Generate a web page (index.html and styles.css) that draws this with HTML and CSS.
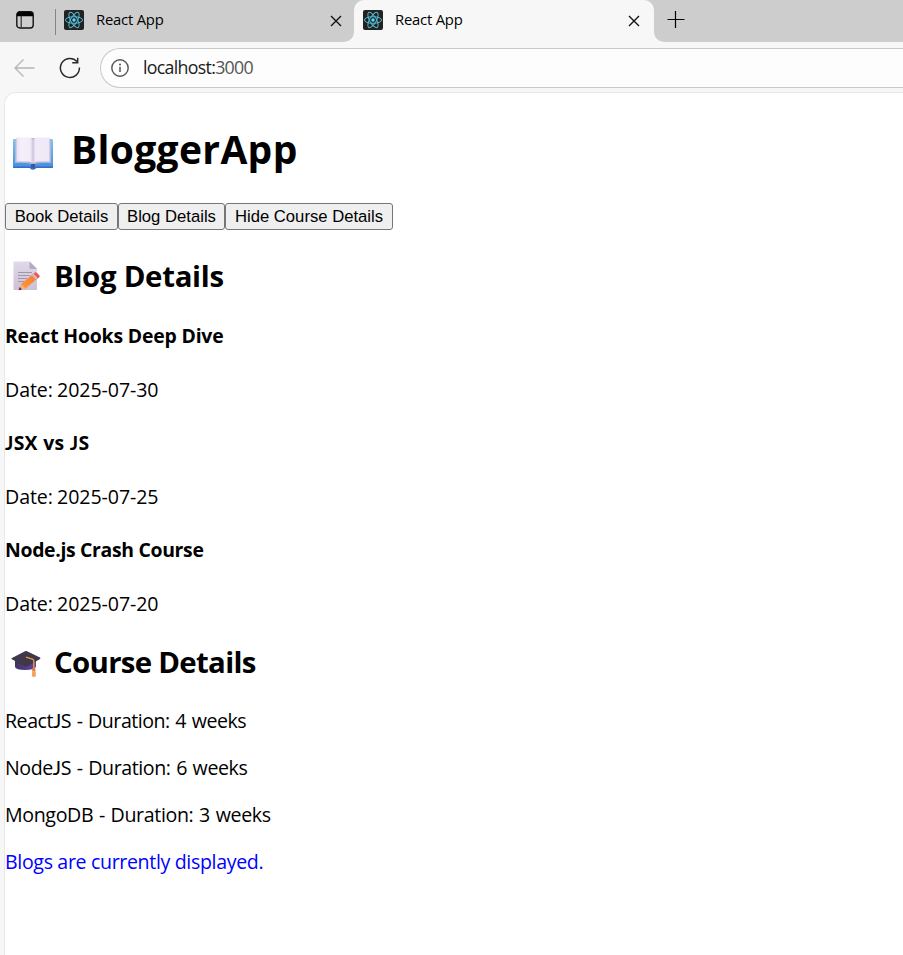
FILE: index.html
```html
<!DOCTYPE html>
<html lang="en">
<head>
<meta charset="utf-8">
<title>React App</title>
<link rel="stylesheet" href="styles.css">
</head>
<body>
<svg width="0" height="0" class="defs">
  <symbol id="react" viewBox="0 0 20 20">
    <rect width="20" height="20" rx="2" fill="#222"/>
    <g fill="none" stroke="#53b9d3" stroke-width="1">
      <ellipse cx="10" cy="10" rx="8.6" ry="3.3"/>
      <ellipse cx="10" cy="10" rx="8.6" ry="3.3" transform="rotate(60 10 10)"/>
      <ellipse cx="10" cy="10" rx="8.6" ry="3.3" transform="rotate(120 10 10)"/>
    </g>
    <circle cx="10" cy="10" r="1.7" fill="#61dafb"/>
  </symbol>
  <symbol id="close" viewBox="0 0 12 12">
    <path d="M1 1L11 11M11 1L1 11" fill="none" stroke="#111" stroke-width="1.4"/>
  </symbol>
</svg>
<header class="tabs">
  <div class="tools">
    <svg class="panel" width="18" height="18" viewBox="0 0 18 18"><rect x=".8" y=".8" width="16.4" height="16.2" rx="3" fill="none" stroke="#111" stroke-width="1.4"/><path d="M1 5.2V3.5Q1 1 3.5 1H14.5Q17 1 17 3.5V5.2Z" fill="#000"/><path d="M5.2 5V17" stroke="#333" stroke-width="1.2"/></svg>
    <span class="divider"></span>
  </div>
  <div class="tab first">
    <svg class="logo" width="20" height="20"><use href="#react"/></svg>
    <span class="label">React App</span>
    <svg class="close" width="12" height="12"><use href="#close"/></svg>
  </div>
  <div class="tab active">
    <svg class="logo" width="20" height="20"><use href="#react"/></svg>
    <span class="label">React App</span>
    <svg class="close" width="12" height="12"><use href="#close"/></svg>
  </div>
  <div class="rest"><svg width="18" height="18" viewBox="0 0 18 18"><path d="M.5 8.5H17.5M8.5 0V17" stroke="#000" stroke-width="1.2"/></svg></div>
</header>
<nav class="toolbar">
  <svg class="back" width="21" height="18" viewBox="0 0 21 18"><path d="M20.5 9H1M9.5 .5L1 9L9.5 17.5" fill="none" stroke="#b5b5b5" stroke-width="1.3"/></svg>
  <svg class="reload" width="22" height="22" viewBox="0 0 22 22"><path d="M20.4 10.5A9.5 9.5 0 1 1 18 4.6M18.7 .8V5.7H13.2" fill="none" stroke="#2b2b2b" stroke-width="1.5"/></svg>
  <div class="address">
    <svg width="18" height="18" viewBox="0 0 18 18"><circle cx="9" cy="9" r="8.2" fill="none" stroke="#555" stroke-width="1.4"/><path d="M9 7.8V13" stroke="#555" stroke-width="1.5"/><circle cx="9" cy="5.4" r="1" fill="#555"/></svg>
    <span class="url">localhost:<span class="port">3000</span></span>
  </div>
</nav>
<main class="page">
  <h1><svg class="book" width="42" height="34" viewBox="0 0 42 34">
    <defs><linearGradient id="cover" x2="0" y2="1"><stop stop-color="#79c9ec"/><stop offset="1" stop-color="#3790e0"/></linearGradient>
    <linearGradient id="leaf"><stop stop-color="#e8e3f3"/><stop offset=".15" stop-color="#f5f0fb"/><stop offset=".42" stop-color="#f1ebf7"/><stop offset=".5" stop-color="#cfc5df"/><stop offset=".58" stop-color="#f1ebf7"/><stop offset="1" stop-color="#eee8f7"/></linearGradient></defs>
    <path d="M1 4Q1 3 2 3H40Q41 3 41 4V31Q41 32 40 32H24Q23 33.5 21 33.5T18 32H2Q1 32 1 31Z" fill="url(#cover)"/>
    <path d="M1 30.5H41V31Q41 32 40 32H24Q23 33.5 21 33.5T18 32H2Q1 32 1 31Z" fill="#4067c4"/>
    <path d="M3 4L5 2H37L39 4V27Q25 26 21 29Q17 26 3 27Z" fill="#bdb2d3"/>
    <path d="M4.5 2.5Q4.5 1.5 6 1.5H16Q20 1.5 21 4Q22 1.5 26 1.5H36Q37.5 1.5 37.5 2.5V25.5H26Q22 25.5 21 28Q20 25.5 16 25.5H4.5Z" fill="url(#leaf)"/>
    <path d="M19 28.5Q21 27 23 28.5V31Q21 32.5 19 31Z" fill="#35589f"/></svg><span>BloggerApp</span></h1>
  <div class="actions"><button class="b1">Book Details</button><button class="b2">Blog Details</button><button class="b3">Hide Course Details</button></div>
  <section>
    <h2><svg class="memo" width="28" height="30" viewBox="0 0 28 30">
      <defs><linearGradient id="sheet" x2="0" y2="1"><stop stop-color="#e0d9e7"/><stop offset="1" stop-color="#cdc0d9"/></linearGradient>
      <linearGradient id="pencil" x1="0" y1="1" x2="1" y2="0"><stop stop-color="#ff9a3d"/><stop offset="1" stop-color="#f67a2f"/></linearGradient></defs>
      <path d="M1 .5H17L24 7.5V29H1Q.5 29 .5 28V1Q.5 .5 1 .5Z" fill="url(#sheet)"/>
      <path d="M16.5 .5L24 8H18Q16.5 8 16.5 6.5Z" fill="#b7a9c4"/>
      <path d="M5 11.5H19M5 14.5H17M5 17.5H14M5 20.5H11" stroke="#a197ad" stroke-width="1.1"/>
      <path d="M6 29L8 23L20 13L24.5 17.5L12.5 27.5Z" fill="url(#pencil)"/>
      <path d="M5.5 29.3L8 23L12.5 27.5Z" fill="#e8b58e"/><path d="M5.5 29.3L6.7 26L9 28.4Z" fill="#682d4c"/>
      <path d="M19 14L22 11.5Q23 11 24 12L26.5 14.5Q27 15.5 26 16.5L23.5 18.5Z" fill="#f4524c"/><path d="M18.5 14.3L20.5 12.6L25 17.2L23 18.8Z" fill="#d7b9bd"/></svg><span class="blog-title">Blog Details</span></h2>
    <h4 class="t1">React Hooks Deep Dive</h4>
    <p class="date">Date: 2025-07-30</p>
    <h4 class="t2"><span class="j">J</span>SX vs <span class="j">J</span>S</h4>
    <p class="date">Date: 2025-07-25</p>
    <h4 class="t3">Node.js Crash Course</h4>
    <p class="date">Date: 2025-07-20</p>
  </section>
  <section class="courses">
    <h2><svg class="cap" width="30" height="28" viewBox="0 0 30 28">
      <defs><linearGradient id="band"><stop stop-color="#41345f"/><stop offset="1" stop-color="#6245a0"/></linearGradient></defs>
      <path d="M4 10V17Q5 20 14 20Q23 20 25 17V10Z" fill="url(#band)"/>
      <path d="M.5 9Q0 8.3 1 8L14 1.2Q15 .8 16 1.2L29 7.5Q30 8.2 29 9L17 16Q15 17 13 16Z" fill="#40374b"/>
      <path d="M15 7.2L21.5 9.2Q22.8 9.8 22.8 11V20" fill="none" stroke="#e39b3d" stroke-width="1.4"/>
      <path d="M21.5 18.5H24.2L25 26Q23 28 20.8 26Z" fill="#f6a25c"/><path d="M21.4 18.5H24.3V20.5H21.2Z" fill="#d3703b"/></svg><span class="course-title">Course Details</span></h2>
    <p class="c1">React<span class="j">J</span>S - Duration: 4 weeks</p>
    <p class="c2">Node<span class="j">J</span>S - Duration: 6 weeks</p>
    <p class="c3">MongoDB - Duration: 3 weeks</p>
  </section>
  <p class="status">Blogs are currently displayed.</p>
</main>
</body>
</html>
```
FILE: styles.css
```css
* { box-sizing: border-box; }
html, body { height: 100%; }
body {
  margin: 0;
  display: flex;
  flex-direction: column;
  overflow: hidden;
  background: #f7f7f7;
  color: #000;
  font: 19.6px/26.7px "Open Sans", "Noto Sans", sans-serif;
  white-space: nowrap;
}
svg { flex: none; display: block; }
.defs { display: none; }

.tabs {
  display: flex;
  height: 42px;
  flex: none;
  background: linear-gradient(#cdcdcd, #cdcdcd) 0 0 / 100% 10px no-repeat #f7f7f7;
}
.tools, .tab.first, .rest { background: #cdcdcd; }
.tools { width: 56px; display: flex; align-items: center; padding: 0 0 2px 16px; }
.divider { width: 1px; height: 26px; margin: 4px 0 0 21px; background: #858585; }
.tab { display: flex; align-items: center; font-size: 14.8px; padding-bottom: 2px; }
.tab.first { width: 298px; padding-left: 8px; border-bottom-right-radius: 10px; }
.tab.active { width: 300px; padding-left: 9px; background: #f7f7f7; border-radius: 10px 10px 0 0; }
.label { margin: 0 0 2px 12px; letter-spacing: -.2px; flex: 1; }
.close { margin-right: 14px; margin-top: 1px; }
.first .close { margin-right: 12px; }
.rest { flex: 1; border-bottom-left-radius: 10px; padding: 11px 0 0 13px; }

.toolbar { display: flex; align-items: center; height: 51px; flex: none; padding-left: 14px; }
.reload { margin-left: 24px; }
.address {
  flex: 1;
  height: 40px;
  margin: 1px 0 0 19px;
  padding-left: 10px;
  display: flex;
  align-items: center;
  border: 1px solid #c9c9c9;
  border-right: 0;
  border-radius: 20px 0 0 20px;
  background: #fdfdfd;
}
.url { margin: 0 0 2px 14px; font-size: 17.8px; letter-spacing: -.7px; color: #1b1b1b; }
.port { color: #555; }

.page {
  flex: 1;
  margin: -1px 0 0 4px;
  padding-top: 29px;
  background: #fff;
  border: 1px solid #e8e8e8;
  border-width: 1px 0 0 1px;
  border-top-left-radius: 12px;
}
h1, h2, h4, p { margin: 0; }
h1, h2 { display: flex; }
h1 { font-size: 39px; line-height: 53px; margin-bottom: 28px; letter-spacing: .33px; }
h2 { font-size: 29.4px; line-height: 40px; margin: 26px 0 26.6px; }
h4 { font-size: 19.4px; line-height: 26.7px; margin-bottom: 27.4px; }
p { letter-spacing: -.4px; }
.blog-title { letter-spacing: -.3px; }
.course-title { letter-spacing: -.7px; }
.t1 { letter-spacing: -.18px; }
.t2 { letter-spacing: .3px; }
.t3 { letter-spacing: -.32px; }
.j { font-family: Lato, "Open Sans", sans-serif; line-height: 1; }
.date { margin-bottom: 26.6px; letter-spacing: -.08px; word-spacing: -.8px; }
.book { margin: 14px 17px 0 7px; }
.memo { margin: 5px 13px 0 8px; }
.cap { margin: 8px 13px 0 6px; }

.actions { display: flex; height: 27px; }
button {
  height: 27px;
  padding: 0;
  border: 1px solid #767676;
  border-radius: 3px;
  background: #efefef;
  color: #000;
  font: 16.67px "Liberation Sans", Arial, sans-serif;
}
.b1 { width: 113px; }
.b2 { width: 107px; }
.b3 { width: 168px; }

.courses { margin-top: -2.8px; }
.courses h2 { margin: 0 0 25.6px; }
.c1, .c2, .c3 { margin-bottom: 20.3px; word-spacing: 1px; }
.c1 { letter-spacing: -.48px; }
.c2 { letter-spacing: -.42px; }
.c3 { letter-spacing: -.36px; }
.status { color: #00f; letter-spacing: -.35px; }
```
